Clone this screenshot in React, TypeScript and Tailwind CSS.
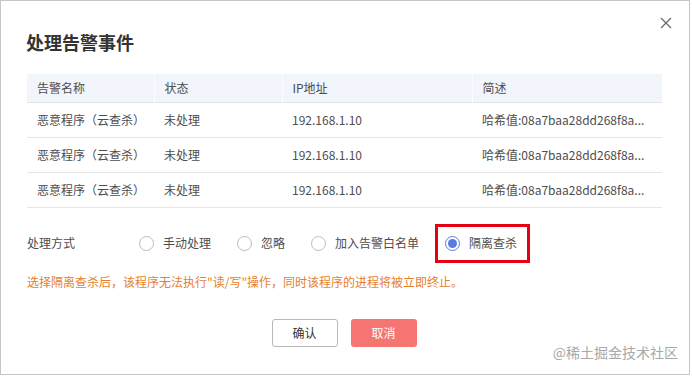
import React from 'react';

const rows = [
  { name: '恶意程序（云查杀）', status: '未处理', ip: '192.168.1.10', desc: '哈希值:08a7baa28dd268f8a...' },
  { name: '恶意程序（云查杀）', status: '未处理', ip: '192.168.1.10', desc: '哈希值:08a7baa28dd268f8a...' },
  { name: '恶意程序（云查杀）', status: '未处理', ip: '192.168.1.10', desc: '哈希值:08a7baa28dd268f8a...' },
];

const Radio: React.FC<{ checked?: boolean; label: string }> = ({ checked, label }) => (
  <label className="flex items-center gap-[9px] text-[12px] text-[#4d4d4d] whitespace-nowrap">
    <span
      className={
        checked
          ? 'w-[15px] h-[15px] rounded-full border border-[#5a7be4] flex items-center justify-center bg-white'
          : 'w-[15px] h-[15px] rounded-full border border-[#bdbdbd] bg-white'
      }
    >
      {checked && <span className="w-[9px] h-[9px] rounded-full bg-[#5a7be4]" />}
    </span>
    {label}
  </label>
);

export default function App() {
  return (
    <div
      className="relative w-[690px] h-[375px] bg-white border border-[#c6c6c6] px-[25px] pt-[28px]"
      style={{ fontFamily: '"Noto Sans CJK SC", "Liberation Sans", sans-serif' }}
    >
      {/* close */}
      <button className="absolute top-[16px] right-[17px] w-[12px] h-[12px] text-[#666]">
        <svg viewBox="0 0 12 12" className="w-[12px] h-[12px]" fill="none" stroke="currentColor" strokeWidth="1.2">
          <path d="M1 1 L11 11 M11 1 L1 11" />
        </svg>
      </button>

      <h2 className="text-[18px] leading-[26px] font-bold text-[#333]">处理告警事件</h2>

      <table className="mt-[19px] w-[635px] ml-[1px] text-[12px] border-collapse table-fixed">
        <colgroup>
          <col className="w-[127px]" />
          <col className="w-[128px]" />
          <col className="w-[190px]" />
          <col className="w-[190px]" />
        </colgroup>
        <thead>
          <tr className="h-[28px] bg-[#f2f5fb] border-b border-[#e2e5ec] text-[#4d4d4d]">
            <th className="font-normal text-left pl-[10px] border-r border-[#fbfcfe]">告警名称</th>
            <th className="font-normal text-left pl-[10px] border-r border-[#fbfcfe]">状态</th>
            <th className="font-normal text-left pl-[10px] border-r border-[#fbfcfe]">IP地址</th>
            <th className="font-normal text-left pl-[10px]">简述</th>
          </tr>
        </thead>
        <tbody>
          {rows.map((r, i) => (
            <tr key={i} className="h-[35px] border-b border-[#e6e6e6] text-[#4d4d4d]">
              <td className="pl-[10px] whitespace-nowrap">{r.name}</td>
              <td className="pl-[10px]">{r.status}</td>
              <td className="pl-[10px]">{r.ip}</td>
              <td className="pl-[10px] whitespace-nowrap">{r.desc}</td>
            </tr>
          ))}
        </tbody>
      </table>

      <div className="mt-[16px] h-[39px] flex items-center ml-[1px]">
        <span className="w-[112px] text-[12px] text-[#4d4d4d]">处理方式</span>
        <div className="flex items-center gap-[26px]">
          <Radio label="手动处理" />
          <Radio label="忽略" />
          <Radio label="加入告警白名单" />
        </div>
        <div className="ml-[16px] h-[39px] flex items-center border-[3px] border-[#e50012] pl-[7px] pr-[10px]">
          <Radio checked label="隔离查杀" />
        </div>
      </div>

      <p className="mt-[11px] ml-[1px] text-[12px] leading-[16px] text-[#e57f2e]">
        选择隔离查杀后，该程序无法执行"读/写"操作，同时该程序的进程将被立即终止。
      </p>

      <div className="mt-[29px] flex justify-center gap-[13px] pr-[2px]">
        <button className="w-[66px] h-[28px] rounded-[3px] border border-[#b8b8b8] bg-white text-[12px] text-[#333]">确认</button>
        <button className="w-[66px] h-[28px] rounded-[3px] bg-[#f47571] text-[12px] text-white">取消</button>
      </div>

      <span className="absolute right-[11px] bottom-[13px] text-[14px] leading-[18px] text-[#a8a8a8]">@稀土掘金技术社区</span>
    </div>
  );
}
